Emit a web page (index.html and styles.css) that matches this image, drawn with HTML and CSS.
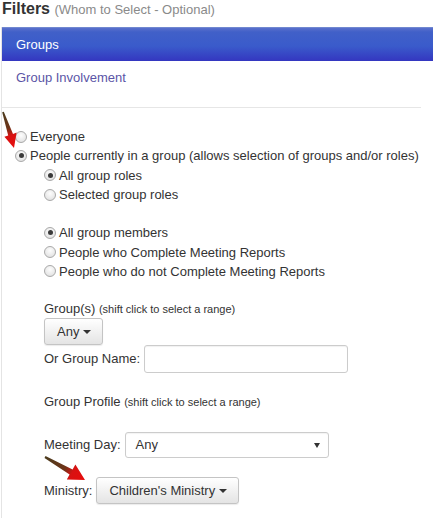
FILE: index.html
```html
<!DOCTYPE html>
<html lang="en">
<head>
    <meta charset="UTF-8">
    <meta name="viewport" content="width=device-width, initial-scale=1.0">
    <title>Filters</title>
    <link rel="stylesheet" href="styles.css">
</head>
<body>
    <div class="page">
        <h3 class="title">Filters <small>(Whom to Select - Optional)</small></h3>

        <div class="panel">
            <div class="panel-heading">Groups</div>

            <div class="panel-body">
                <a class="sub-link" href="#">Group Involvement</a>
                <hr class="divider">

                <!-- Main choice -->
                <div class="radio-list">
                    <label class="radio"><span class="dot"></span>Everyone</label>
                    <label class="radio"><span class="dot checked"></span>People currently in a group (allows selection of groups and/or roles)</label>
                </div>

                <div class="nested">
                    <div class="radio-list">
                        <label class="radio"><span class="dot checked"></span>All group roles</label>
                        <label class="radio"><span class="dot"></span>Selected group roles</label>
                    </div>

                    <div class="radio-list spaced">
                        <label class="radio"><span class="dot checked"></span>All group members</label>
                        <label class="radio"><span class="dot"></span>People who Complete Meeting Reports</label>
                        <label class="radio"><span class="dot"></span>People who do not Complete Meeting Reports</label>
                    </div>

                    <div class="field groups-field">
                        <div class="field-label">Group(s) <small>(shift click to select a range)</small></div>
                        <button class="btn">Any <span class="caret"></span></button>
                    </div>

                    <div class="field inline">
                        <span class="field-label">Or Group Name:</span>
                        <input class="text-input" type="text">
                    </div>

                    <div class="field profile">
                        <div class="field-label">Group Profile <small>(shift click to select a range)</small></div>
                    </div>

                    <div class="field inline day">
                        <span class="field-label">Meeting Day:</span>
                        <div class="select">Any <span class="select-arrow"></span></div>
                    </div>

                    <div class="field inline ministry">
                        <span class="field-label">Ministry:</span>
                        <button class="btn">Children's Ministry <span class="caret"></span></button>
                    </div>
                </div>
            </div>
        </div>

        <!-- annotation arrows -->
        <svg class="arrow arrow-one" width="20" height="42" viewBox="0 0 20 42">
            <defs>
                <linearGradient id="arrowFillA" gradientUnits="userSpaceOnUse" x1="3" y1="4" x2="15" y2="40">
                    <stop offset="0" stop-color="#4b3c1e"/>
                    <stop offset="0.45" stop-color="#6e3418"/>
                    <stop offset="0.65" stop-color="#d81212"/>
                    <stop offset="1" stop-color="#e80c0c"/>
                </linearGradient>
            </defs>
            <polygon points="3.8,3.7 13,25.9 16.6,24.6 14,40 4.4,28.8 8.2,27.5 2.2,4.3" fill="url(#arrowFillA)"/>
        </svg>

        <svg class="arrow arrow-two" width="48" height="30" viewBox="0 0 48 30">
            <defs>
                <linearGradient id="arrowFillB" gradientUnits="userSpaceOnUse" x1="5" y1="5" x2="45" y2="28">
                    <stop offset="0" stop-color="#4b3c1e"/>
                    <stop offset="0.5" stop-color="#6e3418"/>
                    <stop offset="0.68" stop-color="#d81212"/>
                    <stop offset="1" stop-color="#e80c0c"/>
                </linearGradient>
            </defs>
            <polygon points="5.5,4.1 32.6,17.4 35.4,12.4 45,28 26.8,27.6 29.6,22.6 4.5,5.9" fill="url(#arrowFillB)"/>
        </svg>
    </div>
</body>
</html>
```

FILE: styles.css
```css
* {
    margin: 0;
    padding: 0;
    box-sizing: border-box;
}

body {
    font-family: "Liberation Sans", Arial, sans-serif;
    font-size: 13px;
    color: #333;
    background-color: #fff;
}

.page {
    position: relative;
    width: 433px;
    height: 518px;
    overflow: hidden;
}

.title {
    font-size: 16px;
    font-weight: bold;
    line-height: 18px;
    padding-left: 2px;
    color: #333;
}

.title small {
    font-size: 13px;
    font-weight: normal;
    color: #8a8a8a;
}

.panel {
    margin-top: 8px;
    margin-left: 1px;
    border-left: 1px solid #e4e4e4;
    min-height: 500px;
}

.panel-heading {
    height: 34px;
    line-height: 34px;
    padding-left: 14px;
    color: #fff;
    background: linear-gradient(to bottom, #5a70cc 0, #4160c8 12%, #3a5bcb 55%, #3436c0 100%);
    border-top: 1px solid #7088d0;
}

.panel-body {
    padding-left: 14px;
}

.sub-link {
    display: block;
    margin-top: 8px;
    line-height: 18px;
    color: #5b55a6;
    text-decoration: none;
}

.divider {
    border: none;
    border-top: 1px solid #e6e6e6;
    margin-top: 20px;
    margin-right: 12px;
    margin-left: -14px;
}

.radio-list {
    display: flex;
    flex-direction: column;
}

.panel-body > .radio-list {
    margin-top: 19px;
    margin-left: -1px;
}

.radio {
    display: flex;
    align-items: center;
    height: 19.3px;
    white-space: nowrap;
}

.dot {
    width: 12px;
    height: 12px;
    margin-right: 3px;
    border-radius: 50%;
    border: 1px solid #a9a9a9;
    background: radial-gradient(circle at 50% 35%, #fdfdfd 0, #e6e6e6 70%, #d6d6d6 100%);
    display: flex;
    align-items: center;
    justify-content: center;
}

.dot.checked::after {
    content: "";
    width: 5px;
    height: 5px;
    border-radius: 50%;
    background-color: #3a3a3a;
}

.nested {
    padding-left: 28px;
}

.radio-list.spaced {
    margin-top: 19px;
}

.field small {
    font-size: 11px;
}

.groups-field {
    margin-top: 19px;
}

.field-label {
    line-height: 18px;
    white-space: nowrap;
}

.btn {
    display: inline-flex;
    align-items: center;
    gap: 4px;
    height: 27px;
    padding: 0 11px 0 12px;
    font-family: inherit;
    font-size: 13px;
    color: #333;
    background: linear-gradient(to bottom, #fff 0, #e4e4e4 100%);
    border: 1px solid #c4c4c4;
    border-radius: 3px;
    box-shadow: 0 1px 1px rgba(0, 0, 0, 0.08);
}

.caret {
    width: 0;
    height: 0;
    border-left: 4px solid transparent;
    border-right: 4px solid transparent;
    border-top: 4px solid #333;
}

.inline {
    display: flex;
    align-items: center;
    gap: 4px;
}

.text-input {
    width: 204px;
    height: 28px;
    border: 1px solid #ccc;
    border-radius: 3px;
    box-shadow: inset 0 1px 1px rgba(0, 0, 0, 0.06);
}

.profile {
    margin-top: 20px;
}

.day {
    margin-top: 21px;
}

.select {
    position: relative;
    width: 204px;
    height: 26px;
    line-height: 24px;
    padding-left: 10px;
    font-size: 13px;
    border: 1px solid #ccc;
    border-radius: 3px;
    box-shadow: inset 0 1px 1px rgba(0, 0, 0, 0.05);
}

.select-arrow {
    position: absolute;
    right: 8px;
    top: 10px;
    border-left: 3px solid transparent;
    border-right: 3px solid transparent;
    border-top: 5px solid #333;
}

.ministry {
    margin-top: 19px;
}

.arrow {
    position: absolute;
}

.arrow-one {
    left: 0;
    top: 108px;
}

.arrow-two {
    left: 40px;
    top: 452px;
}
```
